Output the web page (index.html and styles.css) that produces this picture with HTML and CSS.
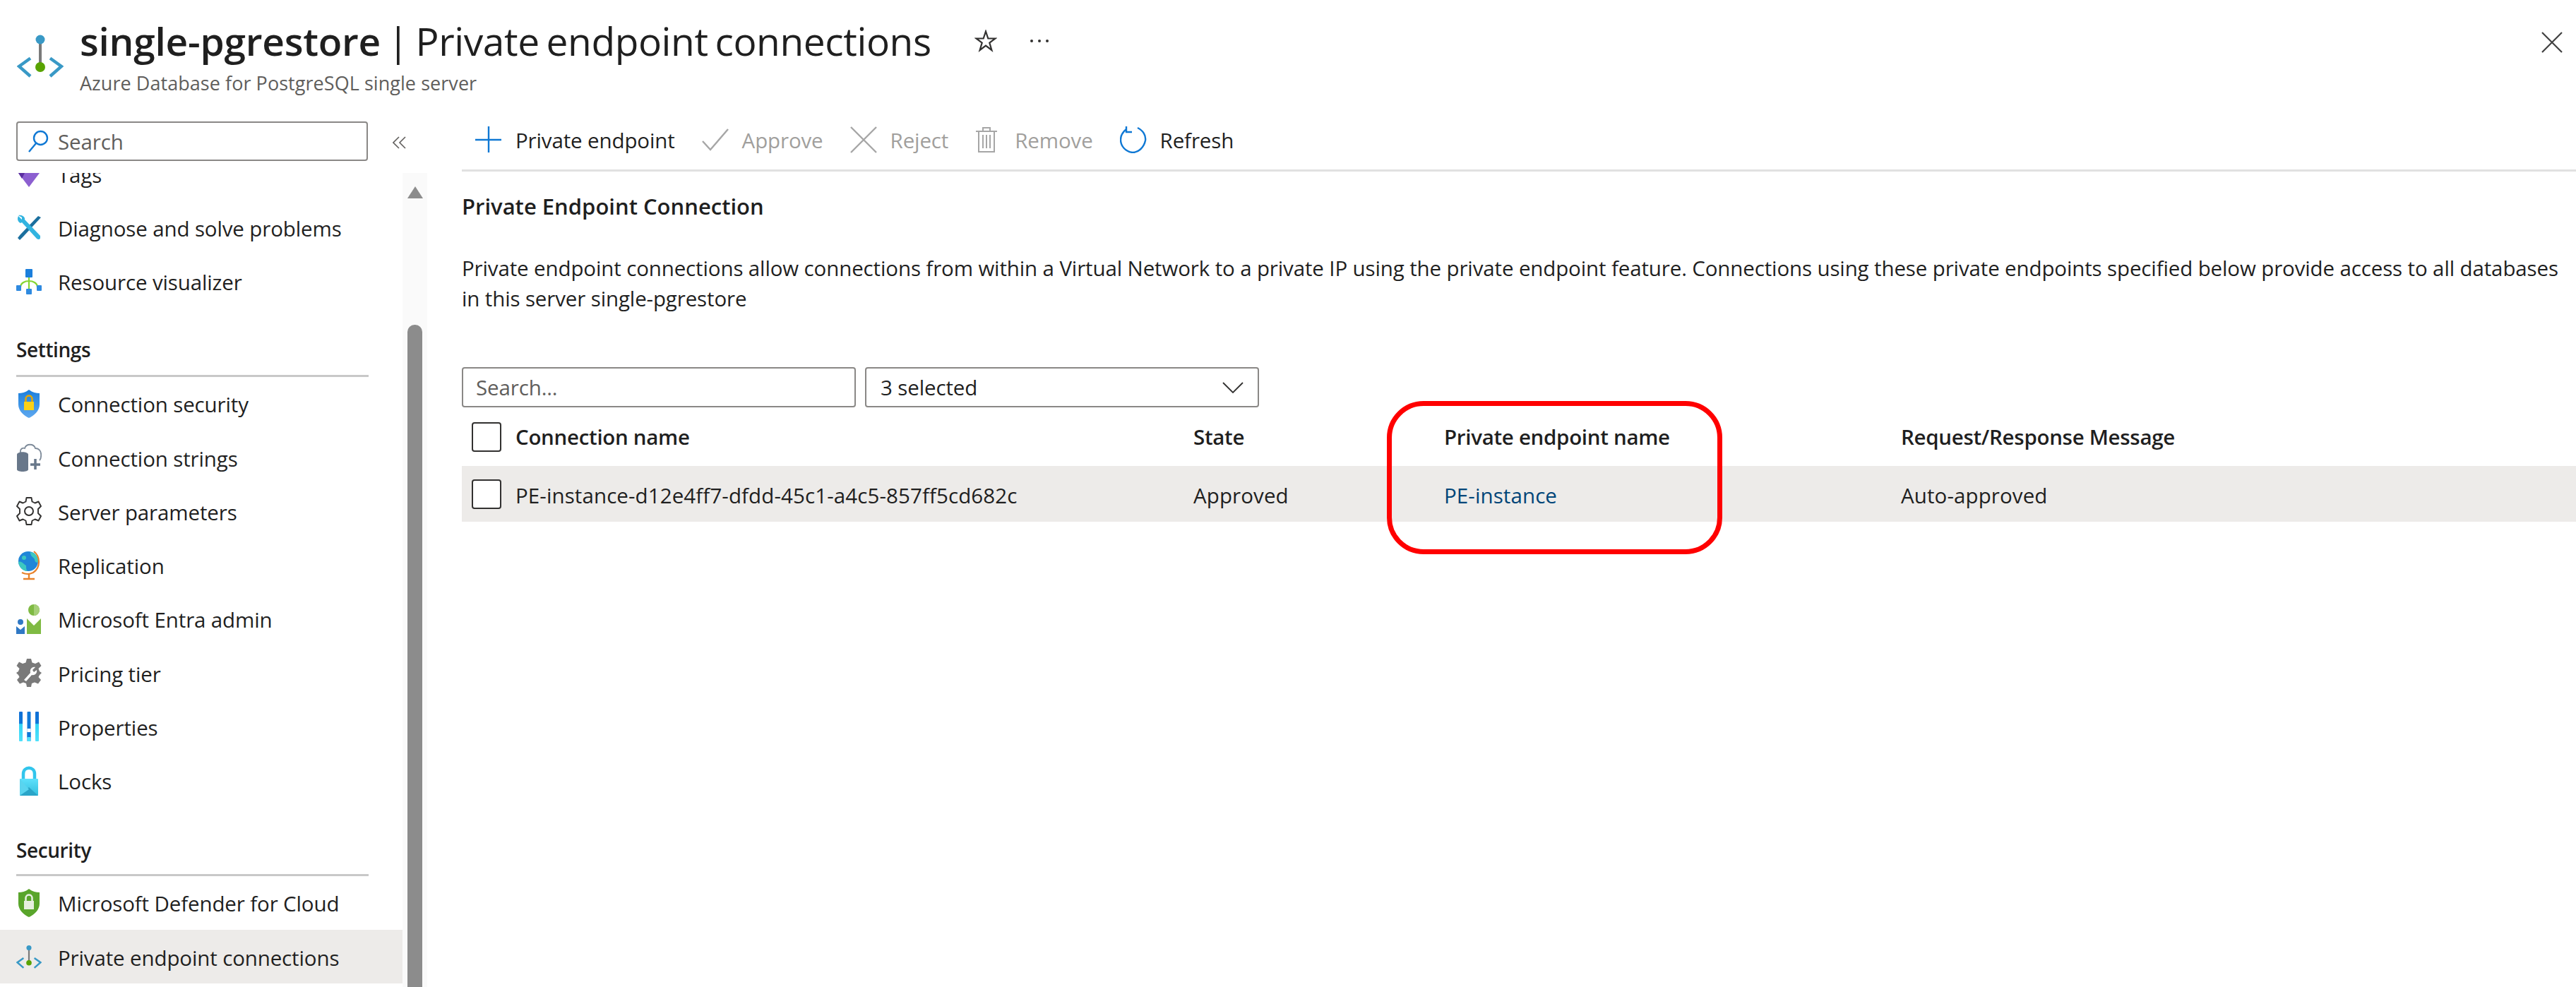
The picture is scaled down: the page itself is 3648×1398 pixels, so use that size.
FILE: index.html
```html
<!DOCTYPE html>
<html lang="en">
<head>
<meta charset="utf-8">
<title>single-pgrestore | Private endpoint connections</title>
<link rel="stylesheet" href="styles.css">
</head>
<body>
<svg class="defs" width="0" height="0" aria-hidden="true">
  <defs>
    <linearGradient id="gShield" x1="0" y1="0" x2="0" y2="1"><stop offset="0" stop-color="#1b7fdc"/><stop offset="1" stop-color="#5ea8ef"/></linearGradient>
    <linearGradient id="gLock" x1="0" y1="0" x2="0" y2="1"><stop offset="0" stop-color="#5ee0fb"/><stop offset="1" stop-color="#32bedd"/></linearGradient>
    <linearGradient id="gBar" x1="0" y1="0" x2="0" y2="1"><stop offset="0" stop-color="#0f6fd6"/><stop offset="0.4" stop-color="#0f78d8"/><stop offset="0.42" stop-color="#32d4f5"/><stop offset="1" stop-color="#4fe0fb"/></linearGradient>
    <symbol id="pe" viewBox="0 0 66 62">
      <path d="M19 34.500 3 46 19 60M47 34.500 63 46 47 60" fill="none" stroke="#3999c6" stroke-width="4.500"/>
      <rect x="31" y="9" width="4" height="37" fill="#7a7a7a"/>
      <circle cx="33" cy="8" r="6.500" fill="#3999c6"/>
      <circle cx="33" cy="47" r="7" fill="#59a300"/>
    </symbol>
  </defs>
</svg>

<header class="blade-head">
  <svg class="logo" viewBox="0 0 66 62"><use href="#pe"/></svg>
  <div class="titles">
    <div class="title-row">
      <h1 class="title"><span class="res">single-pgrestore</span> | Private endpoint connections</h1>
      <svg class="star" viewBox="0 0 32 32"><path d="M16 2.500 19.300 12.500H29.500L21.300 18.600 24.400 29 16 22.700 7.600 29 10.700 18.600 2.500 12.500H12.700Z" fill="none" stroke="#323130" stroke-width="2.200"/></svg>
      <span class="dots"><i></i><i></i><i></i></span>
    </div>
    <div class="subtitle">Azure Database for PostgreSQL single server</div>
  </div>
  <svg class="close" viewBox="0 0 30 30"><path d="M1 1 29 29M29 1 1 29" stroke="#404040" stroke-width="2.200" fill="none"/></svg>
</header>

<div class="blade-body">
  <aside class="side">
    <div class="side-top">
      <div class="side-search">
        <svg class="mag" viewBox="0 0 30 32"><circle cx="18.500" cy="11.500" r="9.500" fill="none" stroke="#0f78d4" stroke-width="2.400"/><path d="M12 19 2 31" stroke="#0f78d4" stroke-width="2.400" fill="none"/></svg>
        <span>Search</span>
      </div>
      <svg class="collapse" viewBox="0 0 20 18"><path d="M9 1 1 9 9 17M18 1 10 9 18 17" fill="none" stroke="#605e5c" stroke-width="1.600"/></svg>
    </div>
    <div class="side-scroll">
      <nav class="menu">
        <a class="item"><svg class="ico" viewBox="0 0 36 42"><path d="M3 20 18 40 33 20 18 2Z" fill="#8c5fd0"/><path d="M3 20 8 28 12 20Z" fill="#5b2fa0"/></svg><span>Tags</span></a>
        <a class="item"><svg class="ico" viewBox="0 0 36 36"><path d="M31 2 35 4 10 31 5 36 2 33 6 28Z" fill="#1b6f9e"/><path d="M6 5 3 2C1 6 2 10 6 12L8 11 29 34C31 36 34 35 34 33L34 30 12 7 12 5C11 2 7 0 3 1L8 4 8 7Z" fill="#32b4e0"/></svg><span>Diagnose and solve problems</span></a>
        <a class="item"><svg class="ico" viewBox="0 0 36 36"><path d="M18 10V30M6 26C6 20 12 17 18 17S30 20 30 26" fill="none" stroke="#86d633" stroke-width="2.200"/><rect x="13" y="0" width="10" height="12" rx="1" fill="#1b7fdc"/><rect x="0" y="23" width="7" height="8" rx="1" fill="#2f8ae0"/><rect x="29" y="23" width="7" height="8" rx="1" fill="#2f8ae0"/><rect x="14" y="28" width="8" height="8" rx="1" fill="#2f8ae0"/></svg><span>Resource visualizer</span></a>
      </nav>
      <div class="group">Settings</div>
      <nav class="menu">
        <a class="item"><svg class="ico" viewBox="0 0 36 42"><path d="M18 1C23 5 28 6 33 6V22C33 31 25 38 18 41 11 38 3 31 3 22V6C8 6 13 5 18 1Z" fill="url(#gShield)"/><rect x="11" y="18" width="14" height="12" fill="#fcd116"/><path d="M13.500 18V14C13.500 8 22.500 8 22.500 14V18" fill="none" stroke="#e8a700" stroke-width="2.500"/></svg><span>Connection security</span></a>
        <a class="item"><svg class="ico" viewBox="0 0 36 42"><path d="M6 14C5 8 10 7 12 8 14 1 25 1 27 8 33 8 36 13 35 20 35 22 34 24 33 25" fill="none" stroke="#7d8a99" stroke-width="1.800"/><path d="M1 17C1 12 17 12 17 17V38C17 42 1 42 1 38Z" fill="#68778a"/><path d="M27 23V38M20 31H34" stroke="#68778a" stroke-width="3.500"/></svg><span>Connection strings</span></a>
        <a class="item"><svg class="ico" viewBox="0 0 36 42"><path d="M14.500 2H21.500L22.500 7.500 26.500 9.500 31.500 7.500 35 14 31 18V24L35 28 31.500 34.500 26.500 32.500 22.500 34.500 21.500 40H14.500L13.500 34.500 9.500 32.500 4.500 34.500 1 28 5 24V18L1 14 4.500 7.500 9.500 9.500 13.500 7.500Z" fill="none" stroke="#323130" stroke-width="1.900" stroke-linejoin="round"/><circle cx="18" cy="21" r="6" fill="none" stroke="#323130" stroke-width="2"/></svg><span>Server parameters</span></a>
        <a class="item"><svg class="ico" viewBox="0 0 36 42"><circle cx="17" cy="15" r="14" fill="#1f86d8"/><path d="M20 2C28 3 32 10 31 16 28 18 26 15 26 12 24 9 20 8 20 2ZM3 16C8 14 11 20 14 21 14 25 14 27 16 29 9 29 4 23 3 16Z" fill="#3dc8c0"/><circle cx="11" cy="10" r="3" fill="#3dc8c0"/><path d="M25 1C34 8 35 24 24 31 18 34 12 33 8 31" fill="none" stroke="#e8822a" stroke-width="2.200"/><path d="M18 33V39M10 40H26" stroke="#e8822a" stroke-width="2.400"/></svg><span>Replication</span></a>
        <a class="item"><svg class="ico" viewBox="0 0 36 42"><circle cx="25" cy="8" r="8" fill="#7fba43"/><path d="M25 0A8 8 0 0 1 25 16Z" fill="#a6cf78"/><path d="M15 20 25 30 35 20V42H15Z" fill="#7fba43"/><circle cx="6" cy="25" r="4" fill="#2f78c4"/><path d="M0 31 6 36 12 31V42H0Z" fill="#2f78c4"/></svg><span>Microsoft Entra admin</span></a>
        <a class="item"><svg class="ico" viewBox="0 0 36 42"><path d="M15 1H21L22.500 6.500 27 8 32 5.500 35.500 11 31.500 15 33 19 36 21 33 24 31.500 27 35 31 31 36.500 26 34.500 22 36 21 41H15L14 36 10 34.500 5 36.500 1 31 4.500 27 3 24 0 21 3 19 4.500 15 .5 11 4 5.500 9 8 13.500 6.500Z" fill="#7a7a7a"/><path d="M11 31 20 21C19 16 22 12 27 13L23 17 25 20 29 17C30 22 26 25 22 24L14 33Z" fill="#fff"/></svg><span>Pricing tier</span></a>
        <a class="item"><svg class="ico" viewBox="0 0 36 42"><rect x="4" y="0" width="5" height="42" rx="1" fill="url(#gBar)"/><rect x="15.500" y="0" width="5" height="42" rx="1" fill="#0f78d8"/><rect x="15.500" y="24" width="5" height="5" fill="#fff"/><rect x="15.500" y="29" width="5" height="8" fill="#0f78d8"/><rect x="15.500" y="36" width="5" height="6" fill="#4fe0fb"/><rect x="27" y="0" width="5" height="42" rx="1" fill="url(#gBar)"/></svg><span>Properties</span></a>
        <a class="item"><svg class="ico" viewBox="0 0 36 42"><path d="M10 20V11C10 0 26 0 26 11V20" fill="none" stroke="#32c5ec" stroke-width="4.500"/><rect x="5" y="18" width="26" height="24" rx="1" fill="url(#gLock)"/><path d="M5 42 18 30 31 42Z" fill="#2aa5c8"/><path d="M5 18 18 33 5 42Z" fill="#5ad4ef"/></svg><span>Locks</span></a>
      </nav>
      <div class="group group-sec">Security</div>
      <nav class="menu">
        <a class="item"><svg class="ico" viewBox="0 0 36 42"><path d="M18 1C23 5 28 6 33 6V22C33 31 25 38 18 41 11 38 3 31 3 22V6C8 6 13 5 18 1Z" fill="#59a52b"/><rect x="11" y="18" width="14" height="12" fill="#e6efe0"/><path d="M13.500 18V14C13.500 8 22.500 8 22.500 14V18" fill="none" stroke="#e6efe0" stroke-width="2.500"/></svg><span>Microsoft Defender for Cloud</span></a>
        <a class="item item-on"><svg class="ico" viewBox="0 0 66 62"><use href="#pe"/></svg><span>Private endpoint connections</span></a>
      </nav>
    </div>
    <div class="scrollbar">
      <span class="arrow"></span>
      <span class="thumb"></span>
    </div>
  </aside>

  <main class="content">
    <div class="toolbar">
      <button class="tool"><svg class="tico" viewBox="0 0 38 38"><path d="M19 0V37M0 19H37" stroke="#0f78d4" stroke-width="2.400" fill="none"/></svg><span>Private endpoint</span></button>
      <button class="tool off"><svg class="tico" viewBox="0 0 38 38"><path d="M1 21 12 33 37 4" stroke="#a6a6a6" stroke-width="2.400" fill="none"/></svg><span>Approve</span></button>
      <button class="tool off"><svg class="tico" viewBox="0 0 38 38"><path d="M1 1 37 37M37 1 1 37" stroke="#a6a6a6" stroke-width="2.400" fill="none"/></svg><span>Reject</span></button>
      <button class="tool off"><svg class="tico tico-t" viewBox="0 0 32 38"><path d="M5 8V36H27V8M1 7H31M11 7V2H21V7M11 12V31M16 12V31M21 12V31" stroke="#a6a6a6" stroke-width="2" fill="none"/></svg><span>Remove</span></button>
      <button class="tool"><svg class="tico" viewBox="0 0 38 38"><path d="M25 2C33 6 37 13 36 20 34 30 26 37 18 37 8 36 1 28 1 19 1 13 4 8 9 4" stroke="#0f78d4" stroke-width="2.400" fill="none"/><path d="M9 0V8H17" stroke="#0f78d4" stroke-width="2.400" fill="none"/></svg><span>Refresh</span></button>
    </div>
    <div class="pane">
      <h2 class="pane-title">Private Endpoint Connection</h2>
      <p class="desc">Private endpoint connections allow connections from within a Virtual Network to a private IP using the private endpoint feature. Connections using these private endpoints specified below provide access to all databases<br>in this server single-pgrestore</p>
      <div class="filters">
        <div class="field ph">Search...</div>
        <div class="field sel"><span>3 selected</span><svg class="chev" viewBox="0 0 30 16"><path d="M1 1 15 15 29 1" fill="none" stroke="#323130" stroke-width="1.800"/></svg></div>
      </div>
      <div class="grid grid-head">
        <span class="cb"></span><span>Connection name</span><span>State</span><span>Private endpoint name</span><span>Request/Response Message</span>
      </div>
      <div class="grid grid-row">
        <span class="cb"></span><span class="cell">PE-instance-d12e4ff7-dfdd-45c1-a4c5-857ff5cd682c</span><span class="cell">Approved</span><a class="cell link">PE-instance</a><span class="cell">Auto-approved</span>
      </div>
    </div>
  </main>
</div>
<div class="callout"></div>
</body>
</html>
```

FILE: styles.css
```css
* { box-sizing: border-box; }
html, body { margin: 0; height: 1398px; overflow: hidden; background: #fff; }
body { position: relative; font-family: "Open Sans", "Noto Sans", sans-serif; font-size: 29.5px; color: #1f1f1f; letter-spacing: -0.13px; }
.defs { position: absolute; }
.blade-head { height: 150px; display: flex; align-items: flex-start; padding: 48px 19px 0 24px; }
.logo { width: 66px; height: 62px; flex: none; }
.titles { margin-left: 23px; margin-top: -26px; flex: 1; min-width: 0; }
.title-row { display: flex; align-items: center; height: 72px; }
.title { margin: 0; font-size: 55px; font-weight: 400; letter-spacing: -0.4px; word-spacing: -4px; color: #1f1f1f; white-space: nowrap; line-height: 72px; }
.res { font-weight: 600; letter-spacing: -0.25px; }
.star { width: 32px; height: 32px; margin-left: 61px; flex: none; }
.dots { display: flex; gap: 7px; margin-left: 47px; }
.dots i { width: 4px; height: 4px; border-radius: 50%; background: #323130; }
.subtitle { font-size: 27px; color: #605e5c; line-height: 36px; margin-top: 6px; letter-spacing: 0.05px; }
.close { width: 30px; height: 30px; flex: none; margin-top: -3px; }
.blade-body { display: flex; height: 1248px; }
.side { width: 605px; flex: none; position: relative; overflow: hidden; }
.side-top { height: 95px; padding: 22px 0 0 23px; display: flex; align-items: flex-start; }
.side-search { width: 498px; height: 56px; border: 2px solid #8a8886; border-radius: 4px; display: flex; align-items: center; padding-left: 14px; color: #605e5c; }
.mag { width: 30px; height: 32px; margin-right: 13px; }
.collapse { width: 20px; height: 18px; margin: 21px 0 0 35px; }
.side-scroll { width: 570px; height: 1153px; overflow: hidden; }
.menu { display: block; }
.menu:first-child { margin-top: -37px; }
.item { height: 76.25px; display: flex; align-items: center; padding-left: 23px; color: #1f1f1f; white-space: nowrap; }
.item span { margin-top: 2px; }
.item-on { background: #edebe9; }
.ico { width: 36px; height: 42px; margin-right: 23px; flex: none; }
.group { height: 97px; margin-left: 23px; width: 499px; border-bottom: 3px solid #c8c8c8; padding-top: 38px; font-weight: 600; font-size: 28px; letter-spacing: -0.4px; line-height: 40px; }
.group-sec { padding-top: 40px; }
.group + .menu { margin-top: 0; }
.scrollbar { position: absolute; left: 570px; top: 95px; width: 35px; bottom: 0; background: #fafafa; display: flex; flex-direction: column; align-items: center; }
.arrow { margin-top: 19px; width: 0; height: 0; border-left: 11px solid transparent; border-right: 11px solid transparent; border-bottom: 17px solid #8c8c8c; }
.thumb { margin-top: 179px; width: 21px; flex: 1; background: #8c8c8c; border-radius: 10px 10px 0 0; }
.content { flex: 1; min-width: 0; padding-left: 49px; }
.toolbar { height: 93px; border-bottom: 3px solid #e1e1e1; display: flex; align-items: flex-start; padding: 29px 0 0 19px; }
.tool { display: flex; align-items: center; height: 38px; padding: 0; margin: 0 38px 0 0; border: 0; background: none; font: inherit; letter-spacing: inherit; color: #1f1f1f; white-space: nowrap; }
.tool.off { color: #a19f9d; }
.tico { width: 38px; height: 38px; margin-right: 19px; flex: none; }
.tico-t { width: 32px; margin-right: 24px; }
.pane { padding-right: 20px; }
.pane-title { margin: 29px 0 0; font-size: 31px; font-weight: 600; line-height: 40px; letter-spacing: 0; }
.desc { margin: 46px 0 0; line-height: 43px; white-space: nowrap; }
.filters { display: flex; gap: 13px; margin-top: 76px; }
.field { width: 558px; height: 57px; border: 2px solid #8a8886; border-radius: 4px; display: flex; align-items: center; padding-left: 20px; }
.ph { color: #605e5c; padding-left: 18px; }
.sel { justify-content: space-between; padding-right: 20px; }
.chev { width: 30px; height: 16px; }
.grid { display: grid; grid-template-columns: 62px 960px 355px 647px 1fr; align-items: center; padding-left: 14px; margin-right: -20px; white-space: nowrap; }
.grid-head { height: 83px; font-weight: 600; letter-spacing: -0.3px; }
.grid-row { height: 79px; background: #edebe9; letter-spacing: 0.1px; }
.cell { padding-top: 3px; }
.cb { display: block; width: 42px; height: 42px; background: #fff; border: 2px solid #323130; border-radius: 4px; }
.link { color: #004578; }
.callout { position: absolute; left: 1964px; top: 568px; width: 475px; height: 217px; border: 7px solid #ff0000; border-radius: 52px; pointer-events: none; }
```
